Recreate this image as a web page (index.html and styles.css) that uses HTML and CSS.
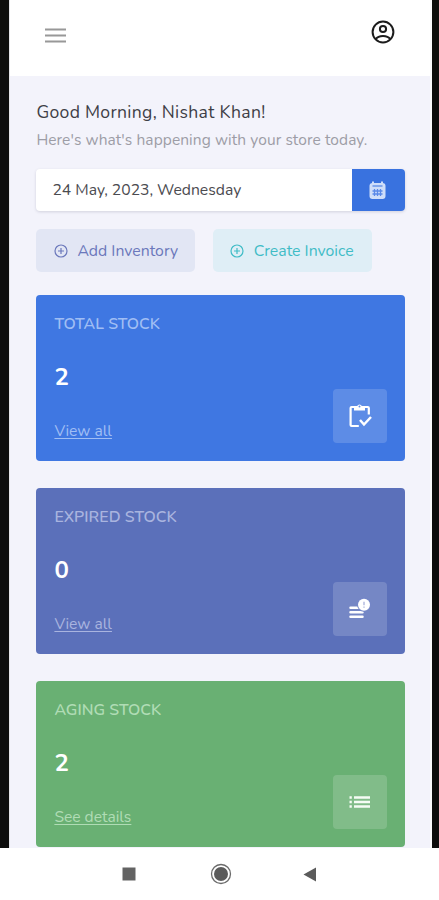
FILE: index.html
```html
<!DOCTYPE html>
<html lang="en">
<head>
<meta charset="utf-8">
<meta name="viewport" content="width=device-width, initial-scale=1">
<title>Store dashboard</title>
<link rel="stylesheet" href="styles.css">
</head>
<body>
<div class="device">
  <div class="screen">
    <header class="topbar">
      <svg class="menu" width="21" height="15" viewBox="0 0 21 15"><path d="M0 1.500h21M0 7.500h21M0 13.500h21" stroke="#989898" stroke-width="2"/></svg>
      <svg class="user" width="24" height="24" viewBox="0 0 24 24" fill="none" stroke="#1c1c1c" stroke-width="2"><circle cx="12" cy="12" r="10.400"/><circle cx="12" cy="9" r="3.100"/><path d="M4.800 19.200c1.400-2.200 4-3.300 7.200-3.300s5.800 1.100 7.200 3.300"/></svg>
    </header>
    <main class="content">
      <h1 class="greeting">Good Morning, Nishat Khan!</h1>
      <p class="subtitle">Here's what's happening with your store today.</p>
      <div class="date">
        <span class="date-text">24 May, 2023, Wednesday</span>
        <span class="date-button">
          <svg width="17" height="19" viewBox="0 0 17 19"><path d="M4 .5v3M13 .5v3" stroke="#cfdef9" stroke-width="2"/><rect x=".5" y="2" width="16" height="16" rx="3" fill="#cfdef9"/><path d="M3.500 5h10" stroke="#3972df" stroke-width="1.200"/><path d="M3.500 10h10M3.500 13h10M5.500 8v7M8.500 8v7M11.500 8v7" stroke="#5a8ae8" stroke-width="1.300"/></svg>
        </span>
      </div>
      <div class="actions">
        <span class="action action-add"><svg width="14" height="14" viewBox="0 0 14 14" fill="none" stroke="currentColor" stroke-width="1.200"><circle cx="7" cy="7" r="6"/><path d="M7 4v6M4 7h6"/></svg><span>Add Inventory</span></span>
        <span class="action action-invoice"><svg width="14" height="14" viewBox="0 0 14 14" fill="none" stroke="currentColor" stroke-width="1.200"><circle cx="7" cy="7" r="6"/><path d="M7 4v6M4 7h6"/></svg><span>Create Invoice</span></span>
      </div>
      <section class="cards">
        <article class="card card-total">
          <h2 class="label">TOTAL STOCK</h2>
          <strong class="count">2</strong>
          <a class="link">View all</a>
          <span class="badge"><svg width="24" height="26" viewBox="0 0 24 26" fill="none" stroke="#fff" stroke-width="2.200" stroke-linejoin="round"><path d="M10.800 23H3.600Q2.600 23 2.600 22V5Q2.600 4 3.600 4H19.800Q20.800 4 20.800 5V11.500"/><path d="M6 3h3.200a2.500 2.500 0 0 1 4.600 0H17v4.500H6z" fill="#fff" stroke="none"/><circle cx="11.500" cy="3.600" r="1" fill="#5d8de9" stroke="none"/><path d="M12 17l4 4.500 7-7.500" stroke-width="2.500" stroke-linejoin="miter"/></svg></span>
        </article>
        <article class="card card-expired">
          <h2 class="label">EXPIRED STOCK</h2>
          <strong class="count">0</strong>
          <a class="link">View all</a>
          <span class="badge"><svg width="24" height="24" viewBox="0 0 24 24"><path d="M2.500 10.800h9M2.500 15.300h12M2.500 19.800h12" stroke="#fff" stroke-width="2.500" stroke-linecap="round"/><circle cx="16" cy="7.800" r="7" fill="#7587c8"/><circle cx="16" cy="7.800" r="6" fill="#fff"/><path d="M16 4.800v3.500M16 9.400v1.400" stroke="#b4bce0" stroke-width="1.500"/></svg></span>
        </article>
        <article class="card card-aging">
          <h2 class="label">AGING STOCK</h2>
          <strong class="count">2</strong>
          <a class="link">See details</a>
          <span class="badge"><svg width="22" height="14" viewBox="0 0 22 14"><path d="M.500 2.500h2.300M.500 7h2.300M.500 11.500h2.300M5 2.500h16M5 7h16M5 11.500h16" stroke="#f5fcf5" stroke-width="2.600"/></svg></span>
        </article>
      </section>
    </main>
  </div>
</div>
<nav class="navbar">
  <svg width="14" height="14" viewBox="0 0 14 14"><path d="M.5.5h13v13H.5z" fill="#636363"/></svg>
  <svg width="22" height="22" viewBox="0 0 22 22"><circle cx="11" cy="11" r="9.500" fill="none" stroke="#6b6b6b" stroke-width="1.300"/><circle cx="11" cy="11" r="7" fill="#5b5b5b"/></svg>
  <svg width="14" height="15" viewBox="0 0 14 15"><path d="M.500 7.500L13 .500v14z" fill="#5b5b5b"/></svg>
</nav>
</body>
</html>
```
FILE: styles.css
```css
* { box-sizing: border-box; }
body {
  margin: 0;
  height: 900px;
  overflow: hidden;
  background: #fff;
  font-family: Nunito, "Noto Sans", sans-serif;
}
.device {
  height: 848px;
  padding: 0 7px 0 9px;
  background: #0d0d0c;
}
.screen {
  height: 848px;
  overflow: hidden;
  background: #f3f3fb;
  border-right: 2px solid #fafafc;
  border-left: 1px solid #e4e4e8;
}
.topbar {
  display: flex;
  justify-content: space-between;
  height: 76px;
  padding: 20px 35px 0;
  background: #fff;
}
.menu { margin-top: 8px; }
.user { margin-top: -0.5px; }
.content { padding: 0 25px 0 26.4px; }
.greeting {
  margin: 0;
  padding-top: 24px;
  font-size: 17.6px;
  font-weight: 400;
  line-height: 25px;
  letter-spacing: 0.3px;
  color: #3e3e46;
  white-space: nowrap;
}
.subtitle {
  margin: 0;
  padding-top: 3px;
  font-size: 15.5px;
  line-height: 24px;
  letter-spacing: 0.08px;
  color: #9d9da6;
  white-space: nowrap;
}
.date {
  display: flex;
  height: 42px;
  margin-top: 17px;
  border-radius: 4px;
  overflow: hidden;
  background: #fff;
  box-shadow: 0 1px 3px rgba(60, 60, 90, 0.18);
}
.date-text {
  flex: 1;
  padding-left: 16px;
  font-size: 15.7px;
  line-height: 42px;
  color: #4b4b50;
  white-space: nowrap;
}
.date-button {
  display: flex;
  align-items: center;
  justify-content: center;
  width: 53px;
  padding-right: 2px;
  background: #3972df;
}
.actions {
  display: flex;
  gap: 17.300px;
  margin-top: 18px;
}
.action {
  display: flex;
  align-items: center;
  gap: 9.500px;
  width: 159px;
  height: 43px;
  padding-left: 17.500px;
  border-radius: 5px;
  font-size: 15.8px;
  white-space: nowrap;
}
.action-add { background: #e2e6f4; color: #6b78bb; }
.action-invoice { background: #dfeef6; color: #3fbcc6; }
.cards {
  display: flex;
  flex-direction: column;
  gap: 27px;
  margin-top: 23px;
}
.card {
  display: grid;
  grid-template-columns: 1fr 54px;
  grid-template-rows: 24px 58px 1fr;
  height: 166px;
  padding: 17px 18px 18px;
  border-radius: 4px;
}
.card-total { background: #3f77e2; color: #a0bef4; }
.card-expired { background: #5b70ba; color: #a9b4df; }
.card-aging { background: #69b073; color: #b0dcb5; }
.label {
  margin: 0;
  font-size: 15.8px;
  font-weight: 600;
  line-height: 24px;
  letter-spacing: 0.05px;
  white-space: nowrap;
}
.count {
  grid-row: 2;
  grid-column: 1;
  align-self: end;
  font-size: 24px;
  font-weight: 700;
  line-height: 34px;
  color: #fff;
}
.link {
  grid-row: 3;
  grid-column: 1;
  align-self: end;
  font-size: 15.6px;
  line-height: 24px;
  text-decoration: underline;
  text-underline-offset: 2px;
  text-decoration-thickness: 1px;
}
.badge {
  grid-row: 1 / 4;
  grid-column: 2;
  align-self: end;
  display: flex;
  align-items: center;
  justify-content: center;
  height: 54px;
  border-radius: 4px;
  background: rgba(255, 255, 255, 0.16);
}
.navbar {
  display: flex;
  align-items: center;
  height: 52px;
  padding-left: 122px;
}
.navbar svg:nth-child(2) { margin-left: 74px; }
.navbar svg:nth-child(3) { margin-left: 71px; }
```
